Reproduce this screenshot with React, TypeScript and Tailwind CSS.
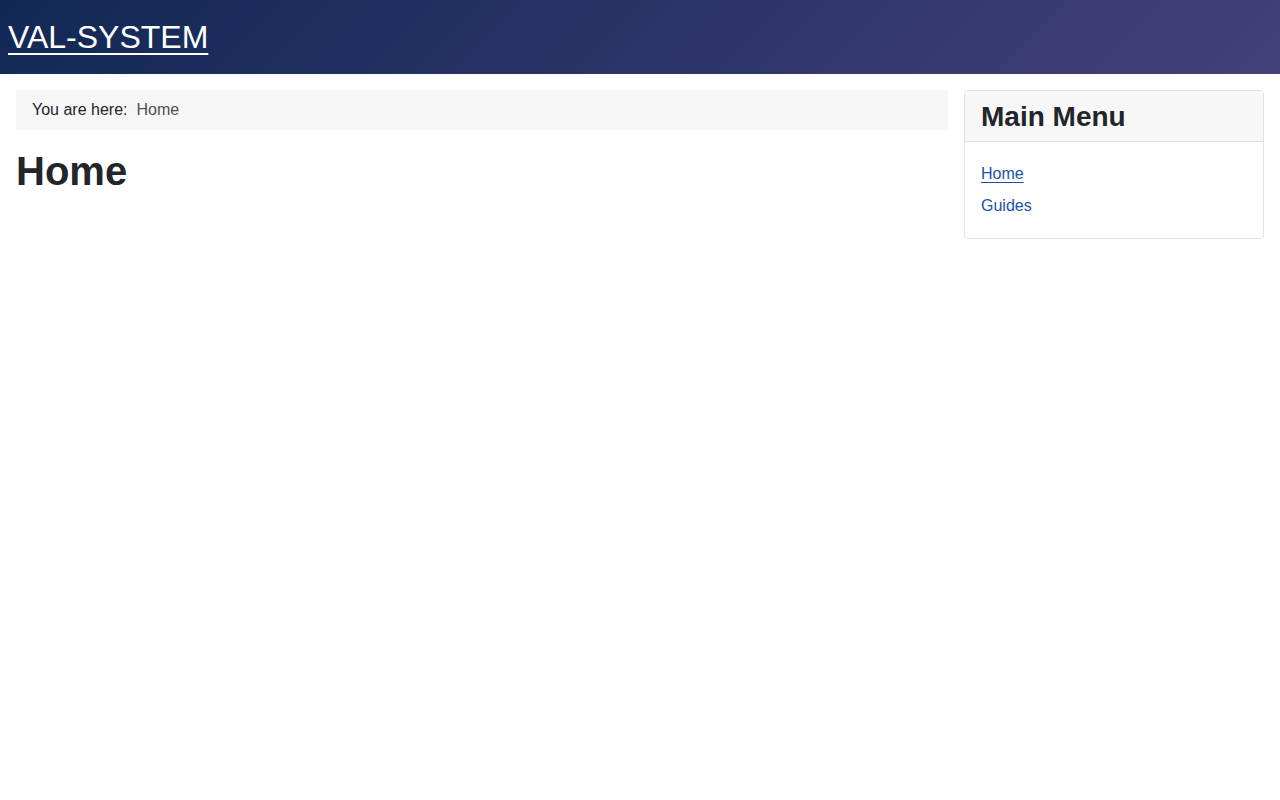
import React from "react";

export default function App() {
  return (
    <div className="min-h-screen bg-white text-[#22262a]" style={{ fontFamily: '"Liberation Sans", Arial, sans-serif' }}>
      <header className="bg-[linear-gradient(135deg,#112855_0%,#2a3466_50%,#454079_100%)] px-2 py-[13px]">
        <a href="#" className="text-[32px] leading-[48px] text-white underline decoration-[2px] underline-offset-[5px]">
          VAL-SYSTEM
        </a>
      </header>
      <div className="flex gap-4 p-4">
        <main className="flex-1">
          <nav className="flex items-center bg-[#f6f6f6] px-4 py-2 text-base leading-6">
            <span className="text-[#22262a]">You are here:</span>
            <span className="ml-[9px] text-[#495057]">Home</span>
          </nav>
          <h1 className="mt-[17px] text-[40px] font-bold leading-[48px] text-[#22262a]">Home</h1>
        </main>
        <aside className="w-[300px] shrink-0">
          <div className="overflow-hidden rounded-[4px] border border-[#dfe3e7]">
            <div className="border-b border-[#dfe3e7] bg-[#f7f7f7] px-4 pt-[9px] pb-[7px]">
              <h3 className="text-[28px] font-bold leading-[34px] text-[#22262a]">Main Menu</h3>
            </div>
            <ul className="px-4 pt-[20px] pb-[12px] text-base leading-6">
              <li className="pb-2">
                <a href="#" className="text-[#224faa] underline underline-offset-[3px]">Home</a>
              </li>
              <li className="pb-2">
                <a href="#" className="text-[#224faa]">Guides</a>
              </li>
            </ul>
          </div>
        </aside>
      </div>
    </div>
  );
}
